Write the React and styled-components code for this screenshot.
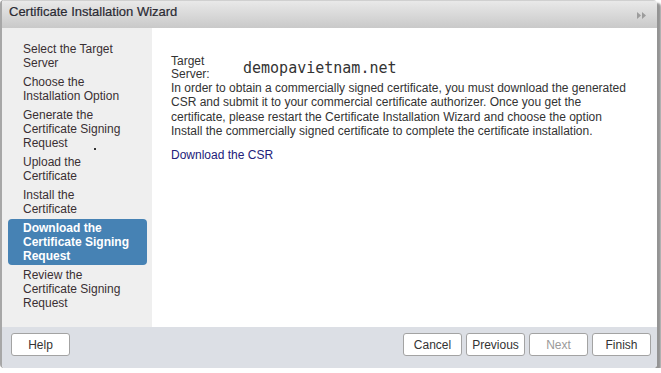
import React from "react";
import styled, { createGlobalStyle } from "styled-components";

const Global = createGlobalStyle`
  html, body { margin: 0; padding: 0; background: #ffffff; }
  body { font-family: "Liberation Sans", Arial, sans-serif; font-size: 12px; color: #333; }
  * { box-sizing: border-box; }
`;

const Dialog = styled.div`
  width: 657px;
  height: 368px;
  display: flex;
  flex-direction: column;
  border-left: 2px solid #a7a7a7;
  border-radius: 4px;
  overflow: hidden;
  box-shadow: 4px 3px 2px rgba(0, 0, 0, 0.42);
  background: #fff;
`;

const TitleBar = styled.div`
  height: 28px;
  flex: none;
  display: flex;
  align-items: flex-start;
  justify-content: space-between;
  padding: 0 10px 0 7px;
  background: linear-gradient(#e9e9e9, #c9c9c9);
  border-top: 1px solid #d0d0d0;
`;

const Title = styled.div`
  font-size: 13px;
  line-height: 22px;
  color: #2a2a33;
  -webkit-text-stroke: 0.2px #2a2a33;
`;

const CollapseIcon = styled.svg`
  margin-top: 11px;
  width: 10px;
  height: 7px;
`;

const Body = styled.div`
  flex: 1;
  display: flex;
  min-height: 0;
`;

const Nav = styled.div`
  position: relative;
  width: 150px;
  flex: none;
  background: #efefef;
  padding: 12px 0 0 6px;
`;

const NavItem = styled.div`
  width: 139px;
  padding: ${(p) => (p.$active ? "2px 12px 2px 15px" : "2px 22px 2px 15px")};
  margin-bottom: 1px;
  line-height: 14px;
  font-size: 12px;
  border-radius: 4px;
  color: ${(p) => (p.$active ? "#ffffff" : "#3a2f33")};
  background: ${(p) => (p.$active ? "#4682b4" : "transparent")};
  font-weight: ${(p) => (p.$active ? "bold" : "normal")};
`;

const Speck = styled.div`
  position: absolute;
  left: 92px;
  top: 120px;
  width: 2px;
  height: 2px;
  background: #333;
`;

const Content = styled.div`
  flex: 1;
  background: #fff;
  padding: 27px 24px 0 19px;
`;

const TargetRow = styled.div`
  display: grid;
  grid-template-columns: 72px 1fr;
  align-items: center;
`;

const Label = styled.div`
  padding-right: 20px;
  line-height: 13px;
  color: #333;
`;

const Value = styled.div`
  font-family: "DejaVu Sans Mono", "Liberation Mono", monospace;
  font-size: 15px;
  color: #333;
`;

const Paragraph = styled.p`
  margin: 0 0 10px;
  line-height: 14.3px;
  color: #333;
`;

const Link = styled.a`
  color: #22207a;
  text-decoration: none;
  line-height: 14px;
  cursor: pointer;
`;

const Footer = styled.div`
  height: 41px;
  flex: none;
  display: flex;
  align-items: flex-start;
  justify-content: space-between;
  padding: 6px 6px 0 9px;
  background: #dcdfe5;
`;

const ButtonGroup = styled.div`
  display: flex;
  gap: 4px;
`;

const Button = styled.button`
  width: 59px;
  height: 23px;
  padding: 0;
  border: 1px solid #a3a3a3;
  border-radius: 3px;
  background: #fff;
  font-family: "Liberation Sans", Arial, sans-serif;
  font-size: 12px;
  color: ${(p) => (p.disabled ? "#9a9a9a" : "#333")};
`;

const steps = [
  "Select the Target Server",
  "Choose the Installation Option",
  "Generate the Certificate Signing Request",
  "Upload the Certificate",
  "Install the Certificate",
  "Download the Certificate Signing Request",
  "Review the Certificate Signing Request",
];

export default function App() {
  return (
    <>
      <Global />
      <Dialog>
        <TitleBar>
          <Title>Certificate Installation Wizard</Title>
          <CollapseIcon viewBox="0 0 10 7">
            <path d="M0 0 L4 3.5 L0 7 Z M5 0 L9 3.5 L5 7 Z" fill="#9c9c9c" />
          </CollapseIcon>
        </TitleBar>
        <Body>
          <Nav>
            {steps.map((s, i) => (
              <NavItem key={s} $active={i === 5}>
                {s}
              </NavItem>
            ))}
            <Speck />
          </Nav>
          <Content>
            <TargetRow>
              <Label>Target Server:</Label>
              <Value>demopavietnam.net</Value>
            </TargetRow>
            <Paragraph>
              In order to obtain a commercially signed certificate, you must download the
              generated CSR and submit it to your commercial certificate authorizer. Once you
              get the certificate, please restart the Certificate Installation Wizard and choose
              the option Install the commercially signed certificate to complete the certificate
              installation.
            </Paragraph>
            <Link>Download the CSR</Link>
          </Content>
        </Body>
        <Footer>
          <Button>Help</Button>
          <ButtonGroup>
            <Button>Cancel</Button>
            <Button>Previous</Button>
            <Button disabled>Next</Button>
            <Button>Finish</Button>
          </ButtonGroup>
        </Footer>
      </Dialog>
    </>
  );
}
